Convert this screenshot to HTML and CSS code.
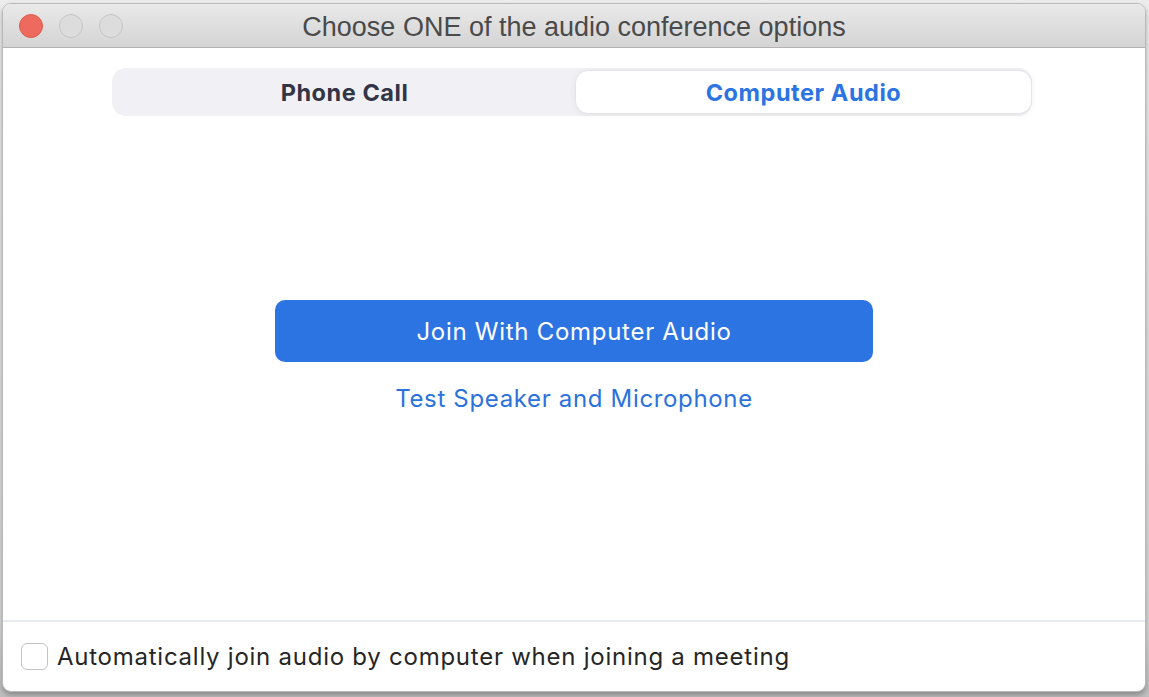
FILE: index.html
```html
<!DOCTYPE html>
<html lang="en">
<head>
<meta charset="utf-8">
<title>Choose ONE of the audio conference options</title>
<link rel="stylesheet" href="styles.css">
</head>
<body>
<div class="window">
  <div class="titlebar">
    <div class="lights">
      <span class="light close"></span>
      <span class="light"></span>
      <span class="light"></span>
    </div>
    <div class="title">Choose ONE of the audio conference options</div>
  </div>
  <div class="content">
    <div class="main">
      <div class="segmented">
        <div class="seg phone">Phone Call</div>
        <div class="seg active">Computer Audio</div>
      </div>
      <button class="join">Join With Computer Audio</button>
      <a class="test">Test Speaker and Microphone</a>
    </div>
    <div class="footer">
      <span class="checkbox"></span>
      <span class="label">Automatically join audio by computer when joining a meeting</span>
    </div>
  </div>
</div>
</body>
</html>
```

FILE: styles.css
```css
html, body {
  margin: 0;
  padding: 0;
}
body {
  width: 1149px;
  height: 697px;
  background: linear-gradient(#ececec, #d6d6d6 90%, #bdbdbd);
  font-family: "Inter", "Liberation Sans", sans-serif;
  overflow: hidden;
}
.window {
  margin: 3px 3px 0 2px;
  width: 1142px;
  height: 687px;
  border: 1px solid #b9b9b9;
  border-radius: 9px;
  background: #fff;
  display: flex;
  flex-direction: column;
  overflow: hidden;
  box-shadow: 0 3px 5px rgba(0, 0, 0, 0.28);
}
.titlebar {
  position: relative;
  height: 43px;
  flex: none;
  background: linear-gradient(#e9e9e9, #d4d4d4);
  border-bottom: 1px solid #b3b3b3;
  display: flex;
  align-items: center;
  justify-content: center;
}
.lights {
  position: absolute;
  left: 16px;
  top: 10px;
  display: flex;
  gap: 16px;
}
.light {
  width: 22px;
  height: 22px;
  border-radius: 50%;
  background: #dcdcdc;
  border: 1px solid #c6c6c6;
}
.light.close {
  background: #ee6a5e;
  border-color: #dc5a4f;
}
.title {
  font-family: "Liberation Sans", "Inter", sans-serif;
  font-size: 27px;
  color: #4a4a4a;
  margin-top: 4px;
}
.content {
  flex: 1;
  display: flex;
  flex-direction: column;
}
.main {
  flex: 1;
  display: flex;
  flex-direction: column;
  align-items: center;
}
.segmented {
  margin-top: 20px;
  margin-left: -4px;
  width: 918px;
  height: 44px;
  padding: 2px 0 2px 2px;
  background: #f1f1f5;
  border-radius: 14px;
  display: flex;
}
.seg {
  flex: 1;
  display: flex;
  align-items: center;
  justify-content: center;
  font-size: 23.5px;
  font-weight: 700;
  letter-spacing: 0.55px;
  color: #333547;
  border-radius: 13px;
}
.seg.phone {
  flex: 0 0 461px;
}
.seg.active {
  background: #fff;
  color: #2c74e2;
  border: 1px solid #e4e4ea;
  box-shadow: 0 1px 6px rgba(0, 0, 0, 0.06);
}
.join {
  margin-top: 184px;
  width: 598px;
  height: 62px;
  border: none;
  border-radius: 10px;
  background: #2d74e3;
  color: #fff;
  font-family: inherit;
  font-size: 24px;
  letter-spacing: 0.72px;
  font-weight: 400;
}
.test {
  margin-top: 22px;
  font-size: 24px;
  letter-spacing: 0.66px;
  color: #2b72dd;
}
.footer {
  flex: none;
  height: 69px;
  border-top: 2px solid #e8ebf0;
  display: flex;
  align-items: center;
  padding-left: 18px;
  gap: 9px;
}
.checkbox {
  width: 25px;
  height: 25px;
  border: 1px solid #c4c4c4;
  border-radius: 6px;
  background: #fff;
}
.label {
  font-size: 24px;
  letter-spacing: 0.75px;
  color: #262626;
}
```
